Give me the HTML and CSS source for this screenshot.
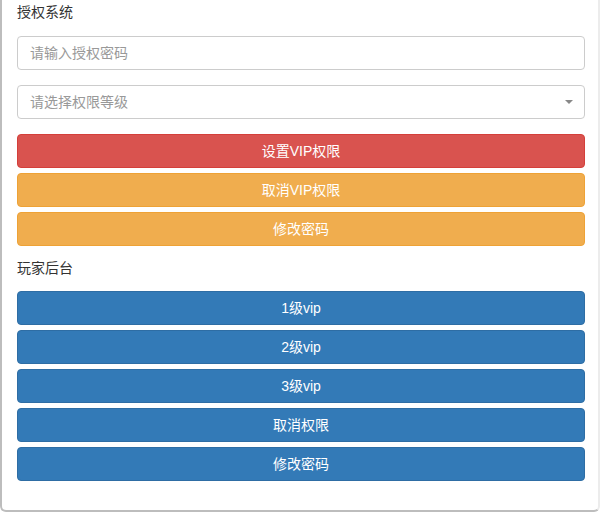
FILE: index.html
```html
<!DOCTYPE html>
<html lang="zh-CN">
<head>
<meta charset="utf-8">
<title>授权系统</title>
<link rel="stylesheet" href="styles.css">
</head>
<body>
<div class="panel">
  <div class="section-title first">授权系统</div>
  <input class="form-control" type="text" placeholder="请输入授权密码">
  <div class="select-wrap">
    <div class="form-control select">请选择权限等级</div>
    <span class="caret"></span>
  </div>
  <div class="btn-group">
    <button class="btn btn-danger">设置VIP权限</button>
    <button class="btn btn-warning">取消VIP权限</button>
    <button class="btn btn-warning">修改密码</button>
  </div>
  <div class="section-title">玩家后台</div>
  <div class="btn-group">
    <button class="btn btn-primary">1级vip</button>
    <button class="btn btn-primary">2级vip</button>
    <button class="btn btn-primary">3级vip</button>
    <button class="btn btn-primary">取消权限</button>
    <button class="btn btn-primary">修改密码</button>
  </div>
</div>
</body>
</html>
```
FILE: styles.css
```css
* { box-sizing: border-box; }
html, body { margin: 0; padding: 0; background: #fff; }
body {
  font-family: "Liberation Sans", "Noto Sans CJK SC", sans-serif;
  font-size: 14px;
  color: #333;
  width: 600px;
  height: 512px;
  overflow: hidden;
}
.panel {
  width: 600px;
  height: 512px;
  border: 2px solid #bdbdbd;
  border-top: none;
  border-right-color: #ececec;
  border-radius: 0 0 6px 6px;
  padding: 2px 13px 0 15px;
}
.section-title {
  line-height: 20px;
  height: 20px;
  margin-top: 12px;
  margin-bottom: 13px;
}
.section-title.first {
  margin-top: 0;
  margin-bottom: 14px;
}
.form-control {
  display: block;
  width: 100%;
  height: 34px;
  padding: 6px 12px;
  font-family: inherit;
  font-size: 14px;
  line-height: 20px;
  color: #555;
  background: #fff;
  border: 1px solid #ccc;
  border-radius: 4px;
  margin: 0 0 15px 0;
  outline: none;
}
.form-control::placeholder { color: #999; }
.select { color: #999; }
.select-wrap { position: relative; }
.caret {
  position: absolute;
  right: 12px;
  top: 15px;
  width: 0;
  height: 0;
  border-left: 4px solid transparent;
  border-right: 4px solid transparent;
  border-top: 4px solid #888;
}
.btn-group {
  display: flex;
  flex-direction: column;
  gap: 5px;
}
.btn {
  display: block;
  width: 100%;
  height: 34px;
  border: 1px solid transparent;
  border-radius: 4px;
  color: #fff;
  font-family: inherit;
  font-size: 14px;
  line-height: 20px;
  padding: 6px 12px;
  text-align: center;
  margin: 0;
}
.btn-danger { background: #d9534f; border-color: #d43f3a; }
.btn-warning { background: #f0ad4e; border-color: #eea236; }
.btn-primary { background: #337ab7; border-color: #2e6da4; }
```
